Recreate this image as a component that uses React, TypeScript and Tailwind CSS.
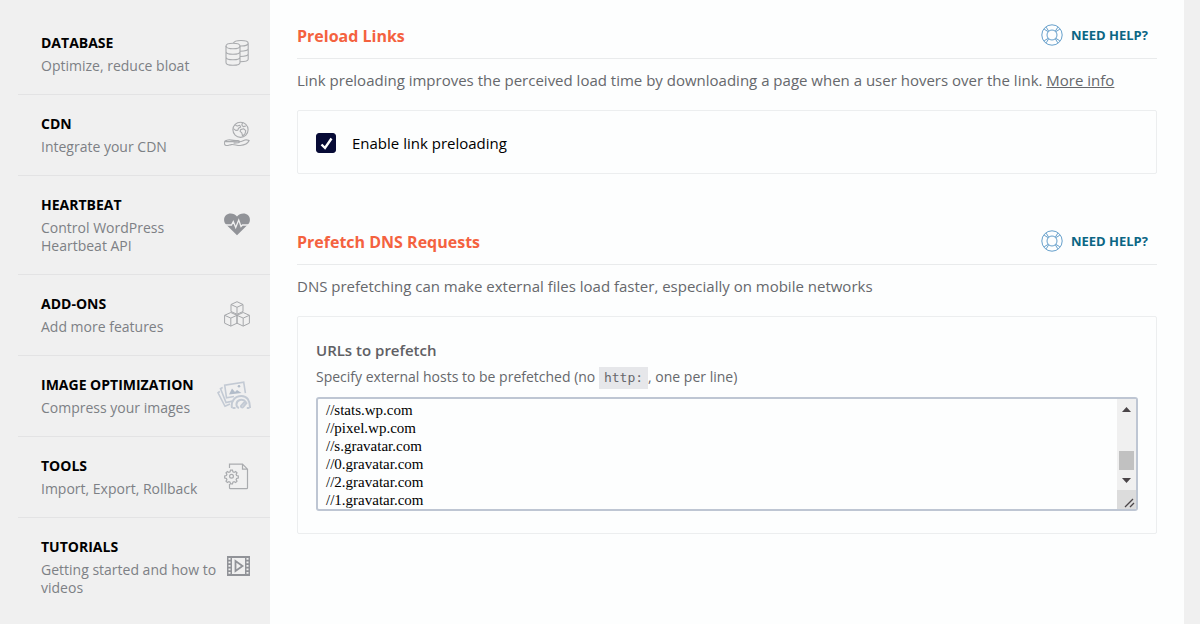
import { useState } from 'react'
import type { ReactNode } from 'react'

const hosts = [
  '//stats.wp.com',
  '//pixel.wp.com',
  '//s.gravatar.com',
  '//0.gravatar.com',
  '//2.gravatar.com',
  '//1.gravatar.com',
]

function DatabaseIcon() {
  return (
    <svg width="26" height="28" viewBox="0 0 26 28" fill="none" stroke="#a9abae" strokeWidth="1.1" aria-hidden="true">
      <ellipse cx="9" cy="7" rx="7" ry="2.8" />
      <path d="M2 7v16.5c0 1.6 3.1 2.8 7 2.8s7-1.200 7-2.800V7M2 12.500c0 1.600 3.100 2.800 7 2.800s7-1.200 7-2.800M2 18c0 1.600 3.100 2.800 7 2.800s7-1.200 7-2.800" />
      <path d="M9.500 4.200c.4-1.500 3.300-2.700 7.500-2.700 4 0 7.200 1.200 7.200 2.700S21 7 17 7h-1M24.200 4.200v16c0 1.400-3.200 2.400-8.200 2.500M24.200 9.500c0 1.500-3.200 2.700-8.200 2.700M24.200 14.800c0 1.500-3.200 2.700-8.200 2.700" />
    </svg>
  )
}

function CdnIcon() {
  return (
    <svg width="26" height="27" viewBox="0 0 26 27" fill="none" stroke="#a9abae" strokeWidth="1.1" strokeLinejoin="round" aria-hidden="true">
      <circle cx="16.500" cy="8.800" r="7.600" />
      <path d="M11 3.800l2.200 1.300 2.500-.8 1 1.700-2.200 1.200-.6 2-2.200.2-2.300-1.800M18.600 1.600l-.8 2.400 1.400 1.600 2.700-.6M16.600 8.600l3-.8 2.200 1.800-.8 3.200-2.400 2.200-.8-3.200-1.700-1.400z" />
      <path d="M.7 20.400c1.700-1.300 4.600-1.900 6.900-1.300 2.200.6 4.400.4 6.500.4 1.800 0 2 2 .3 2.300l-4.800.3M15.600 20.800c2.600 0 4.300-1.900 6.700-2 .9 0 2 .5 2.900.8-1.500 3.300-5.100 4.600-9 4.900-3 .3-6.500-1.600-9.200-.9-1.700.4-3.600 1.300-5 .9-1.700-.5-2-2.800-1.300-4.100z" />
    </svg>
  )
}

function HeartbeatIcon() {
  return (
    <svg width="26" height="23" viewBox="0 0 26 23" aria-hidden="true">
      <path
        fill="#919398"
        d="M13 22.300 1.800 11.300C-.6 8.600-.4 4.500 1.900 2.200c3-2.900 8.600-2.200 11.100 1.300C15.500 0 21.100-.7 24.100 2.200c2.300 2.300 2.500 6.400.1 9.100z"
      />
      <path d="M0 12h7.500l1.800-3.500 2.400 6 3-7.500 2.300 6.500 1.500-1.500H26" fill="none" stroke="#f0f0f0" strokeWidth="1.300" />
    </svg>
  )
}

function AddonsIcon() {
  return (
    <svg width="26" height="26" viewBox="0 0 26 26" fill="none" stroke="#a5a7aa" strokeWidth="1" strokeLinejoin="round" aria-hidden="true">
      <path d="M13 .7l6 2.800v7L13 13.300l-6-2.800v-7zM7 3.500l6 2.800 6-2.800M13 6.300v7" />
      <path d="M6.800 11.500l6.200 2.800v7.900l-6.200 2.900-6.200-2.900v-7.900zM.6 14.300l6.200 2.800 6.200-2.800M6.800 17.100v8" />
      <path d="M19.200 11.500l6.200 2.800v7.900l-6.200 2.900-6.200-2.900v-7.900zM13 14.300l6.200 2.800 6.200-2.800M19.200 17.100v8" />
    </svg>
  )
}

function ImagesIcon() {
  return (
    <svg width="34" height="28" viewBox="0 0 34 28" fill="none" stroke="#c3cad4" strokeWidth="1.600" aria-hidden="true">
      <path d="M17 15.500l-7.500 1.300L7.700 4.200l19-3 1.700 11" />
      <path d="M5.700 6.500L3.500 7.600l5.500 14 6.500-1.500M2.800 10.500L1 11.800l7 13.500 5-2.300" />
      <path d="M12 13.600l3-6 3 3.500 2-2.200 4.500 3.100z" fill="#b2bcc9" stroke="none" />
      <circle cx="22" cy="5.200" r="1.300" fill="#b2bcc9" stroke="none" />
      <path d="M15 27c-1.400-6.500 2.600-12 9.500-12 5.500 0 8.600 4.400 8.500 12" strokeWidth="2" />
      <path d="M22 27c-3.500-1-3.500-6.700.8-8 2.600-.7 5 .3 6.200 2.200M28.500 20l-4.200 4.500c-1 1.500.8 2.700 2 1.400l3.700-4.500M29.800 27h2.700M15.500 27h3" strokeWidth="2" />
    </svg>
  )
}

function ToolsIcon() {
  return (
    <svg width="26" height="27" viewBox="0 0 26 27" fill="none" stroke="#a9abae" strokeWidth="1.200" aria-hidden="true">
      <path d="M5.500 5V1.200h13l5 5v18.500c0 .6-.4 1-1 1H6.500c-.6 0-1-.4-1-1V21M18.500 1.200v5h5" />
      <circle cx="7.500" cy="13.200" r="1.900" />
      <path d="M6.500 7.200h2l.4 1.700 1.200.5 1.500-.9 1.400 1.400-.9 1.500.5 1.200 1.700.4v2l-1.700.4-.5 1.200.9 1.500-1.400 1.400-1.500-.9-1.200.5-.4 1.700h-2l-.4-1.700-1.200-.5-1.500.9L2 18.100l.9-1.500-.5-1.200L.7 15v-2l1.700-.4.500-1.200L2 9.900l1.400-1.400 1.500.9 1.200-.5z" />
    </svg>
  )
}

function TutorialsIcon() {
  return (
    <svg width="23" height="20" viewBox="0 0 23 20" aria-hidden="true">
      <path
        fill="#919398"
        fillRule="evenodd"
        d="M0 0h23v20H0zM5 2v16h13V2zM1.500 2v1.800h2V2zm0 3.500v1.800h2V5.500zm0 3.500v1.800h2V9zm0 3.500v1.800h2v-1.800zm0 3.500v1.800h2V16zm18-14v1.800h2V2zm0 3.500v1.800h2V5.500zm0 3.500v1.800h2V9zm0 3.500v1.800h2v-1.800zm0 3.500v1.800h2V16z"
      />
      <path d="M8.500 5v10l7-5z" fill="none" stroke="#919398" strokeWidth="1.800" />
    </svg>
  )
}

function HelpIcon() {
  return (
    <svg width="22" height="22" viewBox="0 0 22 22" fill="none" stroke="#659fcb" strokeWidth="1" aria-hidden="true">
      <circle cx="11" cy="11" r="10.200" />
      <circle cx="11" cy="11" r="5" />
      <path d="M3.200 5.200l4 2.500M5.200 3.200l2.500 4M18.800 5.200l-4 2.500M16.800 3.200l-2.500 4M3.200 16.800l4-2.500M5.200 18.800l2.500-4M18.800 16.800l-4-2.500M16.800 18.800l-2.500-4" />
    </svg>
  )
}

const menu = [
  { title: 'DATABASE', text: 'Optimize, reduce bloat', icon: <DatabaseIcon /> },
  { title: 'CDN', text: 'Integrate your CDN', icon: <CdnIcon /> },
  { title: 'HEARTBEAT', text: 'Control WordPress Heartbeat API', icon: <HeartbeatIcon /> },
  { title: 'ADD-ONS', text: 'Add more features', icon: <AddonsIcon /> },
  { title: 'IMAGE OPTIMIZATION', text: 'Compress your images', icon: <ImagesIcon /> },
  { title: 'TOOLS', text: 'Import, Export, Rollback', icon: <ToolsIcon /> },
  { title: 'TUTORIALS', text: 'Getting started and how to videos', icon: <TutorialsIcon /> },
]

function Sidebar() {
  return (
    <nav className="w-[270px] shrink-0 pt-[14px] pl-[18px]">
      {menu.map((item) => (
        <a
          key={item.title}
          href="#"
          className="flex items-center justify-between border-[#e3e3e4] border-b py-[19px] pr-5 pl-[23px] last:border-b-0"
        >
          <span className="w-[176px] shrink-0">
            <span className="block whitespace-nowrap font-bold text-[14px] text-black leading-5">
              {item.title}
            </span>
            <span className="mt-1 block text-[#7d8085] text-[14px] leading-[18px]">
              {item.text}
            </span>
          </span>
          <span className="pb-[2px]">{item.icon}</span>
        </a>
      ))}
    </nav>
  )
}

function SectionHeader({ title }: { title: string }) {
  return (
    <div className="flex items-start justify-between border-[#e9ebec] border-b pr-[9px] pb-[10px]">
      <h2 className="font-bold text-[#f4623f] text-[16px] leading-6">{title}</h2>
      <a href="#" className="flex items-center gap-2 font-bold text-[#0b6684] text-[13px] leading-5">
        <HelpIcon />
        NEED HELP?
      </a>
    </div>
  )
}

function Card({ children }: { children: ReactNode }) {
  return <div className="mt-[18px] rounded-xs border border-[#eceeef] px-[18px]">{children}</div>
}

function Scrollbar() {
  return (
    <div className="flex w-[19px] shrink-0 flex-col bg-[#f0f0f0]" aria-hidden="true">
      <div className="flex h-5 items-center justify-center">
        <svg width="9" height="5" viewBox="0 0 9 5" fill="#4a4548">
          <path d="M0 5l4.500-5L9 5z" />
        </svg>
      </div>
      <div className="flex-1" />
      <div className="mx-[2px] h-[19px] bg-[#c1c1c1]" />
      <div className="flex h-5 items-center justify-center">
        <svg width="9" height="5" viewBox="0 0 9 5" fill="#4a4548">
          <path d="M0 0l4.500 5L9 0z" />
        </svg>
      </div>
      <div className="flex h-[19px] items-end justify-end bg-[#dcdcdc] p-px">
        <svg width="11" height="10" viewBox="0 0 11 10" stroke="#4a4548" strokeWidth="1.300">
          <path d="M1 9l8-8M6 9l4-4" />
        </svg>
      </div>
    </div>
  )
}

export default function App() {
  const [preload, setPreload] = useState(true)
  const [urls, setUrls] = useState(hosts.join('\n'))

  return (
    <div className="flex min-h-screen bg-[#f0f0f0] font-['Open_Sans','Noto_Sans',sans-serif]">
      <Sidebar />

      <main className="mr-4 min-w-0 flex-1 bg-[#fdfefe] px-[27px] pt-6">
        <section>
          <SectionHeader title="Preload Links" />
          <p className="mt-[9px] text-[#66686c] text-[15px] leading-6">
            Link preloading improves the perceived load time by downloading a page when a user hovers over the link.{' '}
            <a href="#" className="underline">
              More info
            </a>
          </p>
          <Card>
            <label className="flex items-center gap-4 pt-5 pb-[18px] font-medium text-[15px] text-black leading-6">
              <span className="relative h-5 w-5">
                <input
                  type="checkbox"
                  checked={preload}
                  onChange={(e) => setPreload(e.target.checked)}
                  className="peer block h-5 w-5 appearance-none rounded-[3px] border border-[#070b36] checked:bg-[#070b36]"
                />
                <svg
                  className="pointer-events-none absolute inset-0 hidden peer-checked:block"
                  width="20"
                  height="20"
                  viewBox="0 0 20 20"
                  fill="none"
                  stroke="#fff"
                  strokeWidth="2.400"
                >
                  <path d="M5.500 11.500l3.500 3.500L15.500 5.500" />
                </svg>
              </span>
              Enable link preloading
            </label>
          </Card>
        </section>

        <section className="mt-14">
          <SectionHeader title="Prefetch DNS Requests" />
          <p className="mt-[9px] text-[#66686c] text-[15px] leading-6">
            DNS prefetching can make external files load faster, especially on mobile networks
          </p>
          <Card>
            <label htmlFor="urls" className="mt-[21px] block font-semibold text-[#5f6064] text-[15px] leading-6">
              URLs to prefetch
            </label>
            <p className="mt-[3px] text-[#66686c] text-[14px] leading-6">
              Specify external hosts to be prefetched (no{' '}
              <code className="inline-block bg-[#e6e7ea] px-[5px] font-['DejaVu_Sans_Mono',monospace] text-[13px] leading-[22px]">
                http:
              </code>
              , one per line)
            </p>
            <div className="mt-2 mb-[22px] flex overflow-hidden rounded-[3px] border-2 border-[#bec6d3]">
              <textarea
                id="urls"
                rows={6}
                value={urls}
                onChange={(e) => setUrls(e.target.value)}
                className="block h-[110px] min-w-0 flex-1 resize-none overflow-hidden px-2 pt-[2px] font-['Liberation_Serif',serif] text-[15px] text-black leading-[18px] outline-none"
              />
              <Scrollbar />
            </div>
          </Card>
        </section>
      </main>
    </div>
  )
}
